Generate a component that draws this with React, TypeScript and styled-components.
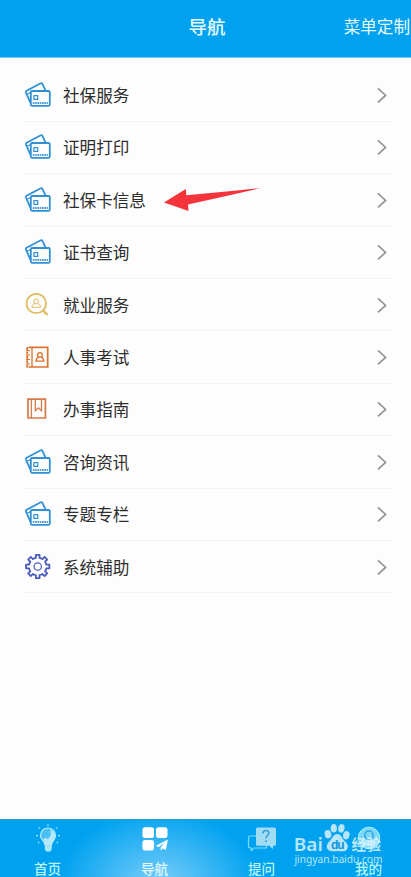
import React from "react";
import styled, { createGlobalStyle } from "styled-components";

const GlobalStyle = createGlobalStyle`
  * { box-sizing: border-box; }
  body {
    margin: 0;
    background: #fdfdfd;
    font-family: "Noto Sans CJK SC", "Noto Sans", sans-serif;
    overflow: hidden;
  }
`;

const Screen = styled.div`
  position: relative;
  display: flex;
  flex-direction: column;
  width: 411px;
  height: 877px;
  overflow: hidden;
  background: #fdfdfd;
`;

const Header = styled.header`
  display: grid;
  grid-template-columns: 1fr auto 1fr;
  align-items: center;
  flex: none;
  height: 58px;
  padding: 0 1px 5px 4px;
  background: #00a2f0;
  border-bottom: 1px solid #6fcbf5;
  color: #e9fbff;
`;

const Title = styled.h1`
  grid-column: 2;
  margin: 0;
  font-size: 18.5px;
  line-height: 28px;
  font-weight: 500;
`;

const HeaderAction = styled.span`
  justify-self: end;
  font-size: 16.6px;
  line-height: 28px;
  white-space: nowrap;
`;

const Menu = styled.ul`
  list-style: none;
  flex: 1;
  margin: 0;
  padding: 11.4px 20px 0 24px;
`;

const MenuRow = styled.li`
  display: flex;
  align-items: center;
  height: 52.4px;
  border-bottom: 1px solid #f2f2f3;
  svg { flex: none; }
`;

const Label = styled.span`
  flex: 1;
  margin-left: 12px;
  font-size: 16.6px;
  line-height: 24px;
  color: #2d2d2d;
`;

const Arrow = styled.svg`
  position: absolute;
  left: 164px;
  top: 186px;
`;

const TabBar = styled.nav`
  display: flex;
  flex: none;
  height: 58px;
  border-top: 1px solid #2b9ccb;
  background:
    radial-gradient(ellipse 100px 76px at 159px 66px, #7ccffa 0%, rgba(96, 196, 247, 0.85) 35%, rgba(0, 162, 240, 0) 100%),
    #00a2f0;
`;

const Tab = styled.div<{ $active?: boolean }>`
  display: flex;
  flex-direction: column;
  align-items: center;
  flex: 0 0 107px;
  padding-top: 4px;
  color: ${(p) => (p.$active ? "#e0f8ff" : "#b5f5fb")};
  font-size: 13.6px;
  line-height: 18px;
  font-weight: 500;
  &:first-child { margin-left: -6px; }
  svg { flex: none; margin-bottom: 5px; }
`;

const Watermark = styled.div`
  position: absolute;
  left: 293px;
  top: 821px;
  width: 92px;
  height: 48px;
  opacity: 0.83;
`;

const CardIcon = () => (
  <svg width="27" height="28" viewBox="0 0 27 28" fill="none" stroke="#3190d4" strokeWidth="1.8" strokeLinejoin="round">
    <path d="M6.5 21.8 2 11.6Q1.6 10.4 2.6 9.8L16.8 2.3Q17.9 1.8 18.4 2.8L21.6 9.6" />
    <path d="M3.2 13 7 11.6" strokeWidth="1.3" />
    <rect x="6.8" y="10" width="19" height="14.8" rx="1.2" />
    <rect x="9.9" y="14.6" width="3.8" height="3.8" strokeWidth="1.2" />
    <path d="M8.8 21.9H24" strokeWidth="2" strokeDasharray="1.7 .6" opacity=".85" />
  </svg>
);

const PersonSearchIcon = () => (
  <svg width="27" height="28" viewBox="0 0 27 28" fill="none" stroke="#dfbd62">
    <circle cx="12.3" cy="12.5" r="9.7" strokeWidth="1.8" />
    <path d="m19.2 19.6 3.7 3.7" strokeWidth="2.4" strokeLinecap="round" />
    <circle cx="12.2" cy="10.4" r="2.5" strokeWidth="1" />
    <path d="M11 12.7c-2.2.6-3.1 1.6-3.1 3.5h8.6c0-1.9-.9-2.9-3.1-3.5" strokeWidth="1" />
  </svg>
);

const NotebookIcon = () => (
  <svg width="27" height="28" viewBox="0 0 27 28" fill="none" stroke="#d9732f">
    <path d="M4.5 4.4H23.7V24H4.5" strokeWidth="1.7" />
    <path d="M3.2 4V24.7" strokeWidth="1.8" strokeDasharray="3 1.4" />
    <path d="M2 7.7h4M2 12.1h4M2 16.5h4M2 20.9h4" strokeWidth="1" />
    <path d="M8 4.6V24" strokeWidth="1.3" />
    <circle cx="15.9" cy="12" r="2.4" strokeWidth="1.3" />
    <path d="M14.8 14.2c-2 .7-2.8 1.6-2.8 4h7.8c0-2.4-.8-3.3-2.8-4" strokeWidth="1.3" />
  </svg>
);

const BookmarkIcon = () => (
  <svg width="27" height="28" viewBox="0 0 27 28" fill="none" stroke="#d67a49">
    <path d="M4 4.2H21.4V23H4Z" strokeWidth="1.7" />
    <path d="M7.4 4.2V23" strokeWidth="1.3" />
    <path d="M11.3 4.2V15.8l3.1-3 3.1 3V4.2" strokeWidth="1.3" />
  </svg>
);

const gearPath = Array.from({ length: 8 }, (_, i) => {
  const point = (degrees: number, radius: number) => {
    const angle = ((i * 45 + degrees) * Math.PI) / 180;
    return `${(13.7 + Math.sin(angle) * radius).toFixed(2)} ${(13.5 - Math.cos(angle) * radius).toFixed(2)}`;
  };
  return `${i ? "L" : "M"}${point(-12, 8.8)}L${point(-9, 11.8)}L${point(9, 11.8)}L${point(12, 8.8)}A8.8 8.8 0 0 1 ${point(33, 8.8)}`;
}).join("") + "Z";

const GearIcon = () => (
  <svg width="27" height="28" viewBox="0 0 27 28" fill="none" stroke="#4b5bbd" strokeLinejoin="round">
    <path d={gearPath} strokeWidth="1.8" />
    <circle cx="13.7" cy="13.5" r="3.7" strokeWidth="1.2" />
  </svg>
);

const Chevron = () => (
  <svg width="14" height="18" viewBox="0 0 14 18" fill="none" stroke="#929292" strokeWidth="1.6">
    <path d="m1 2.4 7.6 7-7.6 7" />
  </svg>
);

const BulbIcon = () => (
  <svg width="30" height="30" viewBox="0 0 30 30">
    <path d="M12 21C11.7 17 7.5 16 7.5 11.5a7.5 7.5 0 0 1 15 0c0 4.5-3.8 5.5-4.1 9.5Z" fill="#49bff2" stroke="#b8f1fb" strokeWidth="1.2" />
    <path d="M17 5.5c5.8 2.5 6.3 7.5 3 11.5l-2.4 4h-5.6c0-3-1-4-2-5.5l2.6-2 2 1.5c2.7-2 4.2-4.2 2.4-9.5Z" fill="#b5e8f8" />
    <path d="M11.8 21h7v4l-1.5 2.7h-4L11.8 25Z" fill="#9ddff6" />
    <path d="M12 23h6.5M12.4 25.2h5.7" stroke="#bdf2fc" />
    <path d="M15 .3v1.8M5.7 3.4 7 4.7M24.3 3.4 23 4.7M3 11.7h2M25 11.7h2M5 19l1.3-1M25 19l-1.3-1" stroke="#9ceafa" strokeWidth="1.2" />
  </svg>
);

const GridIcon = () => (
  <svg width="30" height="30" viewBox="0 0 30 30" fill="#fff">
    <rect x="2.5" y="3.2" width="11.5" height="10.8" rx="2.8" />
    <rect x="16" y="3.2" width="11.5" height="10.8" rx="2.8" />
    <rect x="2.5" y="15.9" width="11.5" height="10.6" rx="2.8" />
    <path d="M27.9 15.4 15.5 22l3.5 1 6-4.5-4.4 5.1v3.2l2-2.2 3.2 1.5Z" />
  </svg>
);

const QuestionIcon = () => (
  <svg width="30" height="30" viewBox="0 0 30 30">
    <path d="M9 12H3.3Q1.5 12 1.5 13.8v8.5Q1.5 24 3.3 24h1v2.5L7 24h12.5V21" fill="none" stroke="#7edcf7" strokeWidth="1.2" />
    <path d="M10.5 3.5h17Q29 3.5 29 5v15.3q0 1.5-1.5 1.5H26V25l-3.7-3.2H10.5Q9 21.8 9 20.3V5Q9 3.5 10.5 3.5Z" fill="#a1dcf5" />
    <path d="M15.8 9.4c.1-4 6.4-3.8 6.2-.3-.1 2.3-3 2.2-3 5.2" fill="none" stroke="#389ed0" strokeWidth="1.5" />
    <circle cx="19" cy="17.2" r="1" fill="#389ed0" />
  </svg>
);

const ProfileIcon = () => (
  <svg width="30" height="30" viewBox="0 0 30 30">
    <circle cx="15" cy="14" r="10.8" fill="#7dd8f7" stroke="#a5effa" />
    <circle cx="15" cy="11.3" r="4.2" fill="none" stroke="#2aa6df" strokeWidth="1.5" />
    <path d="M8 21.5c1-5 4-6 7-6s6 1 7 6" fill="#b3ebfb" />
  </svg>
);

const BaiduWatermark = () => (
  <Watermark>
    <svg width="92" height="48" viewBox="0 0 92 48" fill="#dcf4ff">
      <text x="0.8" y="29.8" fontFamily="Noto Sans, sans-serif" fontWeight="600" fontSize="18" textLength="29" lengthAdjust="spacingAndGlyphs">Bai</text>
      <ellipse cx="35" cy="13.2" rx="3.3" ry="4.2" transform="rotate(-12 35 13.2)" />
      <ellipse cx="40.8" cy="7.2" rx="3.1" ry="4.3" />
      <ellipse cx="48.4" cy="7.4" rx="3.1" ry="4.3" transform="rotate(12 48.4 7.4)" />
      <ellipse cx="53.3" cy="14.2" rx="3.2" ry="4.2" transform="rotate(15 53.3 14.2)" />
      <path d="M44.3 13c4 0 4.5 4.2 7 6.7 3.6 3 4.4 5.5 2.7 8.5-1.5 2.8-5.2 2.2-9.4 1.7-4.2.5-8 1-10-1.6-1.7-2.7-1-5.6 2.4-8.6C39.4 17.3 40 13 44.3 13Z" />
      <text x="38" y="27.8" fontFamily="Liberation Sans, sans-serif" fontWeight="700" fontSize="12" textLength="13.5" fill="#1594d5">du</text>
      <text x="58.5" y="29.2" fontFamily="Noto Sans CJK SC, sans-serif" fontWeight="700" fontSize="14.7" textLength="29.5">经验</text>
      <text x="1.5" y="41.5" fontFamily="Noto Sans, sans-serif" fontSize="11.5" textLength="88" lengthAdjust="spacingAndGlyphs">jingyan.baidu.com</text>
    </svg>
  </Watermark>
);

const menuItems = [
  { label: "社保服务", Icon: CardIcon },
  { label: "证明打印", Icon: CardIcon },
  { label: "社保卡信息", Icon: CardIcon },
  { label: "证书查询", Icon: CardIcon },
  { label: "就业服务", Icon: PersonSearchIcon },
  { label: "人事考试", Icon: NotebookIcon },
  { label: "办事指南", Icon: BookmarkIcon },
  { label: "咨询资讯", Icon: CardIcon },
  { label: "专题专栏", Icon: CardIcon },
  { label: "系统辅助", Icon: GearIcon },
];

const tabs = [
  { label: "首页", Icon: BulbIcon },
  { label: "导航", Icon: GridIcon, active: true },
  { label: "提问", Icon: QuestionIcon },
  { label: "我的", Icon: ProfileIcon },
];

export default function App() {
  return (
    <>
      <GlobalStyle />
      <Screen>
        <Header>
          <Title>导航</Title>
          <HeaderAction>菜单定制</HeaderAction>
        </Header>
        <Menu>
          {menuItems.map(({ label, Icon }) => (
            <MenuRow key={label}>
              <Icon />
              <Label>{label}</Label>
              <Chevron />
            </MenuRow>
          ))}
        </Menu>
        <TabBar>
          {tabs.map(({ label, Icon, active }) => (
            <Tab key={label} $active={active}>
              <Icon />
              {label}
            </Tab>
          ))}
        </TabBar>
        <Arrow width="98" height="28" viewBox="0 0 98 28" fill="#f5333b">
          <path d="M0 16.5 21.8 3 22.3 9.3 60 5.8 97 2 60 10.5 24 18.5 24.5 25Z" />
        </Arrow>
        <BaiduWatermark />
      </Screen>
    </>
  );
}
